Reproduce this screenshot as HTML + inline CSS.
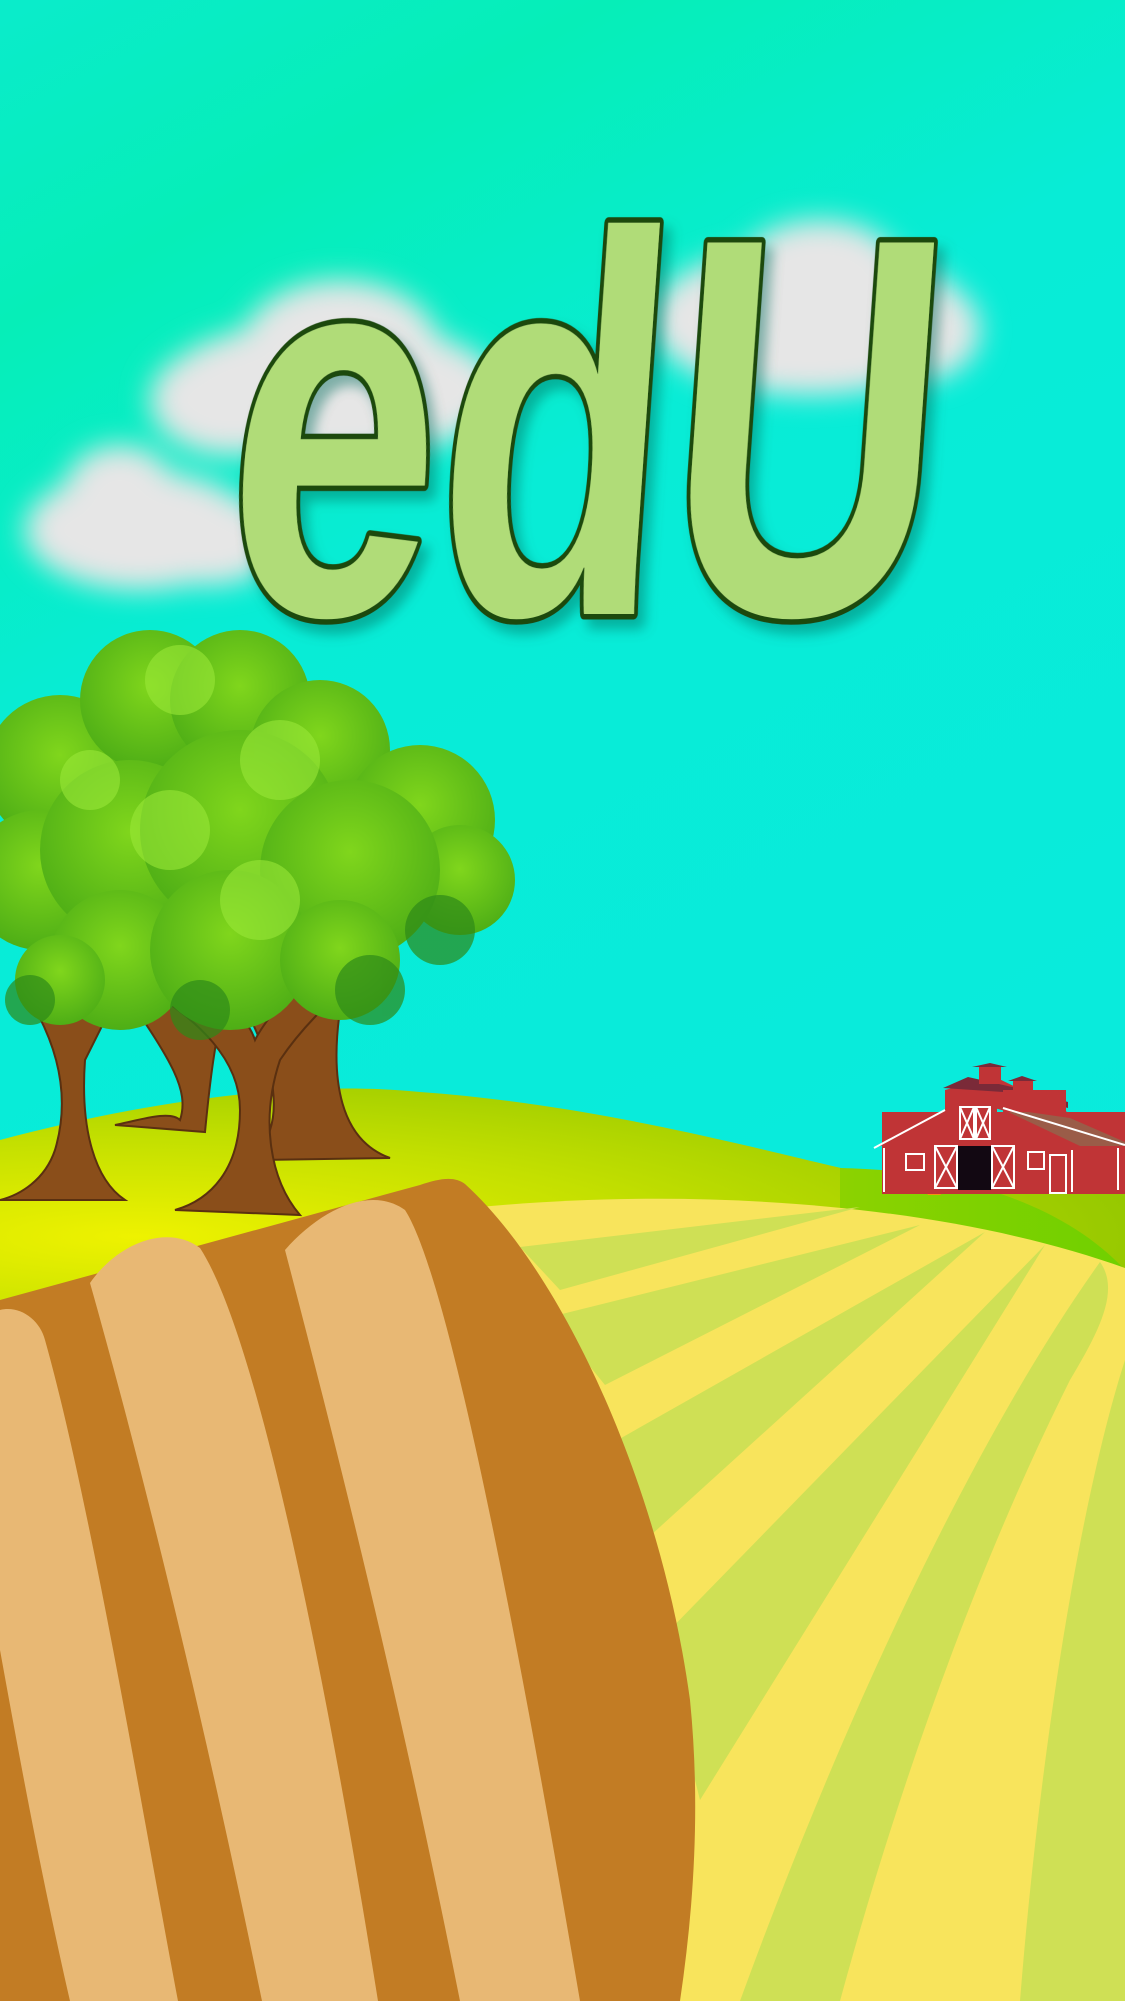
<!DOCTYPE html>
<html><head><meta charset="utf-8"><style>
html,body{margin:0;padding:0;background:#fff}
svg{display:block}
</style></head><body>
<svg width="1125" height="2001" viewBox="0 0 1125 2001" xmlns="http://www.w3.org/2000/svg">
<defs>
<linearGradient id="sky" x1="0" y1="0" x2="0.3" y2="1">
<stop offset="0" stop-color="#0aeccb"/><stop offset="0.15" stop-color="#06eeb8"/><stop offset="0.35" stop-color="#08ecd6"/><stop offset="1" stop-color="#0aeae0"/>
</linearGradient>
<filter id="blur" x="-30%" y="-30%" width="160%" height="160%"><feGaussianBlur stdDeviation="14"/></filter>
<filter id="sh" x="-10%" y="-10%" width="130%" height="130%"><feDropShadow dx="8" dy="10" stdDeviation="6" flood-color="#0a6a5a" flood-opacity="0.45"/></filter>
<radialGradient id="hill" cx="0.12" cy="0.7" r="0.9">
<stop offset="0" stop-color="#eef200"/><stop offset="0.5" stop-color="#c4e000"/><stop offset="1" stop-color="#96c800"/>
</radialGradient>
<linearGradient id="g2" x1="0" y1="0" x2="1" y2="0"><stop offset="0" stop-color="#8cd200"/><stop offset="1" stop-color="#70d000"/></linearGradient>
<radialGradient id="leaf" cx="0.5" cy="0.4" r="0.6"><stop offset="0" stop-color="#80d61c"/><stop offset="1" stop-color="#4eae16"/></radialGradient>
</defs>
<rect width="1125" height="2001" fill="url(#sky)"/>
<g filter="url(#blur)" fill="#e6e6e6">
<ellipse cx="330" cy="390" rx="170" ry="70"/><ellipse cx="340" cy="350" rx="100" ry="70"/><ellipse cx="230" cy="400" rx="80" ry="55"/>
<ellipse cx="140" cy="530" rx="115" ry="60"/><ellipse cx="120" cy="490" rx="55" ry="45"/><ellipse cx="210" cy="540" rx="70" ry="45"/>
<ellipse cx="810" cy="320" rx="160" ry="75"/><ellipse cx="820" cy="270" rx="80" ry="50"/><ellipse cx="920" cy="330" rx="60" ry="50"/>
</g>
<g transform="translate(620 0) skewX(-4) translate(-620 0)">
<text x="262" y="614" font-family="Liberation Sans, sans-serif" font-weight="bold" font-size="540" textLength="712" lengthAdjust="spacingAndGlyphs" fill="#b0dc78" stroke="#1c4a10" stroke-width="11" stroke-linejoin="round" paint-order="stroke" filter="url(#sh)">edU</text>
</g>
<path d="M0 1140 C150 1100 300 1080 420 1092 C600 1105 760 1150 850 1170 L1125 1175 L1125 1300 L0 1300 Z" fill="url(#hill)"/>
<path d="M840 1168 C950 1170 1060 1200 1125 1270 L1125 1320 L840 1320 Z" fill="url(#g2)"/>
<g>
<path d="M927 1195 L940 1195 L980 1170 L960 1170 Z" fill="#f2940e"/>
<rect x="882" y="1112" width="243" height="82" fill="#c03436"/>
<path d="M874 1148 L945 1110 L945 1090 L995 1077 L1125 1140 L1125 1148 L995 1108 L1000 1108 Z" fill="#c03436"/>
<path d="M1000 1108 L1070 1118 L1125 1142 L1125 1146 L1080 1146 Z" fill="#9a5c48"/>
<rect x="945" y="1090" width="52" height="58" fill="#c03436"/>
<path d="M943 1088 L968 1077 L1025 1090 L1068 1102 L1068 1108 L1003 1092 Z" fill="#7a2a38"/>
<rect x="1003" y="1090" width="63" height="22" fill="#c03436"/>
<rect x="979" y="1066" width="22" height="18" fill="#c03436"/><path d="M972 1067 L990 1063 L1007 1067 Z" fill="#7a2a38"/>
<rect x="1013" y="1081" width="20" height="12" fill="#c03436"/><path d="M1008 1081 L1022 1076 L1037 1081 Z" fill="#7a2a38"/>
<path d="M874 1148 L945 1110 M1003 1108 L1125 1145" stroke="#fff" stroke-width="2" fill="none"/>
<g fill="none" stroke="#fff" stroke-width="2">
<rect x="960" y="1107" width="14" height="32"/><rect x="976" y="1107" width="14" height="32"/>
<path d="M960 1107 L974 1139 M974 1107 L960 1139 M976 1107 L990 1139 M990 1107 L976 1139"/>
<rect x="935" y="1146" width="22" height="42"/><path d="M935 1146 L957 1188 M957 1146 L935 1188"/>
<rect x="992" y="1146" width="22" height="42"/><path d="M992 1146 L1014 1188 M1014 1146 L992 1188"/>
<rect x="906" y="1154" width="18" height="16"/><rect x="1028" y="1152" width="16" height="17"/>
<rect x="1050" y="1155" width="16" height="38"/>
<path d="M884 1148 L884 1192 M1072 1150 L1072 1192 M1118 1148 L1118 1190"/>
</g>
<rect x="958" y="1146" width="33" height="44" fill="#120812"/>
</g>
<path d="M470 1208 C700 1185 950 1205 1125 1268 L1125 2001 L600 2001 Z" fill="#f8e45c"/>
<g fill="#cfe055">
<path d="M520 1247 L860 1207 L560 1290 Z"/>
<path d="M550 1317 L920 1225 L605 1385 Z"/>
<path d="M600 1450 L985 1232 L640 1545 Z"/>
<path d="M660 1640 L1045 1245 L700 1800 Z"/>
<path d="M740 2001 C850 1700 980 1430 1100 1262 C1120 1290 1100 1330 1070 1380 C980 1560 900 1780 840 2001 Z"/>
<path d="M1020 2001 C1040 1750 1080 1500 1125 1360 L1125 2001 Z"/>
</g>
<path d="M0 1300 L420 1185 C440 1178 455 1176 465 1184 C560 1270 660 1480 690 1700 C700 1800 695 1900 680 2001 L0 2001 Z" fill="#c27c24"/>
<g fill="#e8b874">
<path d="M90 1283 C120 1240 170 1225 200 1248 C260 1340 330 1700 378 2001 L262 2001 C200 1700 140 1460 90 1283 Z"/>
<path d="M285 1250 C320 1210 370 1185 405 1210 C450 1280 520 1650 580 2001 L460 2001 C400 1700 340 1460 285 1250 Z"/>
<path d="M0 1310 C20 1305 40 1320 45 1340 C90 1500 140 1800 178 2001 L70 2001 C40 1870 20 1760 0 1650 Z"/>
</g>
<g>
<g fill="#8a4e1a" stroke="#5a3010" stroke-width="2">
<path d="M30 1000 C60 1050 70 1100 55 1150 C45 1180 20 1195 0 1200 L125 1200 C95 1180 80 1130 85 1060 L110 1010 Z"/>
<path d="M130 1000 C170 1060 190 1090 180 1120 C170 1110 140 1120 115 1125 L205 1132 C210 1080 215 1040 225 1000 Z"/>
<path d="M240 1000 C270 1050 280 1100 270 1130 L260 1160 L390 1158 C340 1140 330 1080 340 1010 Z"/>
<path d="M140 985 C200 1020 240 1060 240 1110 C240 1170 210 1200 175 1210 L300 1215 C270 1180 260 1120 280 1060 C300 1030 330 1000 350 985 L300 985 C280 1000 260 1030 255 1040 C245 1010 210 990 200 985 Z"/>
</g>
<g fill="url(#leaf)">
<circle cx="60" cy="770" r="75"/><circle cx="150" cy="700" r="70"/><circle cx="240" cy="700" r="70"/>
<circle cx="320" cy="750" r="70"/><circle cx="420" cy="820" r="75"/><circle cx="460" cy="880" r="55"/>
<circle cx="40" cy="880" r="70"/><circle cx="130" cy="850" r="90"/><circle cx="240" cy="830" r="100"/>
<circle cx="350" cy="870" r="90"/><circle cx="120" cy="960" r="70"/><circle cx="230" cy="950" r="80"/>
<circle cx="340" cy="960" r="60"/><circle cx="60" cy="980" r="45"/>
</g>
<g fill="#2e8a18" opacity="0.7">
<circle cx="440" cy="930" r="35"/><circle cx="370" cy="990" r="35"/><circle cx="30" cy="1000" r="25"/><circle cx="200" cy="1010" r="30"/>
</g>
<g fill="#9ae838" opacity="0.6">
<circle cx="180" cy="680" r="35"/><circle cx="280" cy="760" r="40"/><circle cx="170" cy="830" r="40"/><circle cx="90" cy="780" r="30"/><circle cx="260" cy="900" r="40"/>
</g>
</g>
</svg>
</body></html>
